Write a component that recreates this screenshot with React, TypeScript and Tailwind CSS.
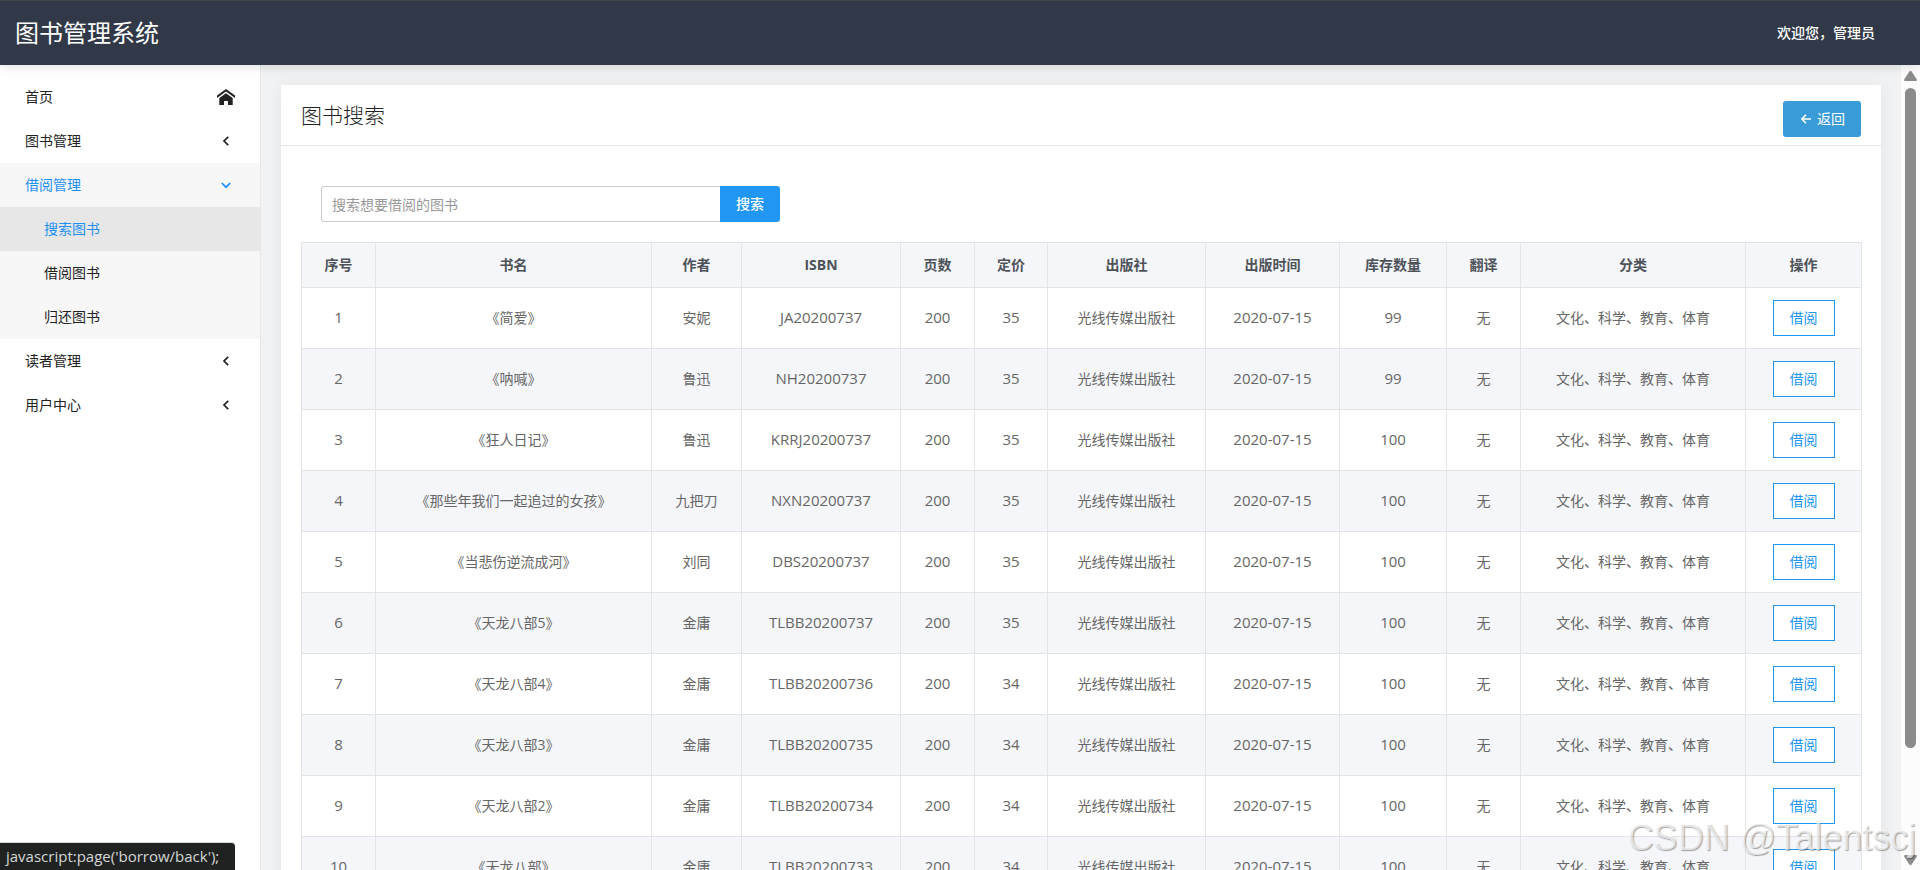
import React, { useState } from 'react';
import clsx from 'clsx';

interface Book {
  id: number;
  name: string;
  author: string;
  isbn: string;
  pages: number;
  price: number;
  press: string;
  date: string;
  stock: number;
  translator: string;
  category: string;
}

interface MenuItem {
  label: string;
  icon?: 'home';
  children?: string[];
}

const common = {
  pages: 200,
  press: '光线传媒出版社',
  date: '2020-07-15',
  translator: '无',
  category: '文化、科学、教育、体育',
};

const books: Book[] = [
  { ...common, id: 1, name: '《简爱》', author: '安妮', isbn: 'JA20200737', price: 35, stock: 99 },
  { ...common, id: 2, name: '《呐喊》', author: '鲁迅', isbn: 'NH20200737', price: 35, stock: 99 },
  { ...common, id: 3, name: '《狂人日记》', author: '鲁迅', isbn: 'KRRJ20200737', price: 35, stock: 100 },
  { ...common, id: 4, name: '《那些年我们一起追过的女孩》', author: '九把刀', isbn: 'NXN20200737', price: 35, stock: 100 },
  { ...common, id: 5, name: '《当悲伤逆流成河》', author: '刘同', isbn: 'DBS20200737', price: 35, stock: 100 },
  { ...common, id: 6, name: '《天龙八部5》', author: '金庸', isbn: 'TLBB20200737', price: 35, stock: 100 },
  { ...common, id: 7, name: '《天龙八部4》', author: '金庸', isbn: 'TLBB20200736', price: 34, stock: 100 },
  { ...common, id: 8, name: '《天龙八部3》', author: '金庸', isbn: 'TLBB20200735', price: 34, stock: 100 },
  { ...common, id: 9, name: '《天龙八部2》', author: '金庸', isbn: 'TLBB20200734', price: 34, stock: 100 },
  { ...common, id: 10, name: '《天龙八部》', author: '金庸', isbn: 'TLBB20200733', price: 34, stock: 100 },
];

// latin: the column holds only digits and latin letters
const columns: { key: keyof Book; title: string; width: string; latin?: boolean }[] = [
  { key: 'id', title: '序号', width: 'w-[74px]', latin: true },
  { key: 'name', title: '书名', width: 'w-[276px]' },
  { key: 'author', title: '作者', width: 'w-[90px]' },
  { key: 'isbn', title: 'ISBN', width: 'w-[159px]', latin: true },
  { key: 'pages', title: '页数', width: 'w-[74px]', latin: true },
  { key: 'price', title: '定价', width: 'w-[73px]', latin: true },
  { key: 'press', title: '出版社', width: 'w-[158px]' },
  { key: 'date', title: '出版时间', width: 'w-[134px]', latin: true },
  { key: 'stock', title: '库存数量', width: 'w-[107px]', latin: true },
  { key: 'translator', title: '翻译', width: 'w-[74px]' },
  { key: 'category', title: '分类', width: 'w-[225px]' },
];

const menu: MenuItem[] = [
  { label: '首页', icon: 'home' },
  { label: '图书管理', children: [] },
  { label: '借阅管理', children: ['搜索图书', '借阅图书', '归还图书'] },
  { label: '读者管理', children: [] },
  { label: '用户中心', children: [] },
];

const HomeIcon = () => (
  <svg className="h-4 w-[18px]" viewBox="0 0 18 16" fill="currentColor" aria-hidden="true">
    <path d="M9 0 0 6.600v2.400L9 2.400l9 6.600V6.600z" />
    <path d="M9 4.200 2.300 9.100V16H7v-4h4v4h4.700V9.100z" />
  </svg>
);

const Chevron = ({ open }: { open: boolean }) => (
  <svg className="h-[10px] w-[10px]" viewBox="0 0 10 10" fill="none" stroke="currentColor" strokeWidth="1.7" aria-hidden="true">
    {open ? <path d="M.8 3 5 7.2 9.2 3" /> : <path d="M7.2.8 3 5l4.2 4.2" />}
  </svg>
);

const Sidebar: React.FC = () => {
  const [openItem, setOpenItem] = useState('借阅管理');
  const [current, setCurrent] = useState('搜索图书');

  return (
    <nav className="w-[261px] shrink-0 border-r border-[#e6e7e9] bg-white pt-[10px] text-[#222]">
      {menu.map((item) => {
        const open = item.label === openItem;
        return (
          <div key={item.label}>
            <button
              className={clsx(
                'flex h-11 w-full items-center justify-between pl-[25px]',
                item.icon ? 'pr-[25px]' : 'pr-[29px]',
                open && 'bg-[#f7f7f7] text-[#1e90f5]'
              )}
              onClick={() => setOpenItem(open ? '' : item.label)}
            >
              <span>{item.label}</span>
              {item.icon ? <HomeIcon /> : <Chevron open={open} />}
            </button>
            {open &&
              item.children?.map((child) => (
                <a
                  key={child}
                  href="#"
                  onClick={() => setCurrent(child)}
                  className={clsx(
                    'flex h-11 items-center pl-11',
                    child === current ? 'bg-[#e7e7e7] text-[#1e90f5]' : 'bg-[#f7f7f7]'
                  )}
                >
                  {child}
                </a>
              ))}
          </div>
        );
      })}
    </nav>
  );
};

const BookTable: React.FC = () => (
  <table className="w-full table-fixed border-collapse text-center">
    <thead>
      <tr className="h-[45px] bg-[#f5f6fa] text-[#4d5259]">
        {columns.map((col) => (
          <th key={col.key} className={clsx('border border-[#e3e4e5] font-bold', col.width)}>
            {col.title}
          </th>
        ))}
        <th className="w-[116px] border border-[#e3e4e5] font-bold">操作</th>
      </tr>
    </thead>
    <tbody className="text-[#666]">
      {books.map((book) => (
        <tr key={book.id} className="h-[61px] even:bg-[#f5f6fa]">
          {columns.map((col) => (
            <td key={col.key} className={clsx('border border-[#e3e4e5]', col.latin && 'text-[15px]')}>
              {book[col.key]}
            </td>
          ))}
          <td className="border border-[#e3e4e5]">
            <button className="h-9 border border-[#2196f3] bg-white px-4 align-middle text-[#2196f3]">借阅</button>
          </td>
        </tr>
      ))}
    </tbody>
  </table>
);

const ScrollBar = () => (
  <div className="flex w-[19px] shrink-0 flex-col items-center bg-[#fcfcfc] pt-[6px] pb-[5px] text-[#8b8b8b]" aria-hidden="true">
    <svg className="h-[10px] w-[13px] shrink-0" viewBox="0 0 13 10" fill="currentColor">
      <path d="M5.4.6a1.4 1.4 0 0 1 2.2 0l5 7.4c.6 1 .2 2-1 2H1.4C.2 10-.2 9 .4 8z" />
    </svg>
    <div className="mt-[7px] flex w-[11px] flex-1 flex-col">
      <div className="h-[86%] rounded-full bg-[#8b8b8b]" />
    </div>
    <svg className="h-[10px] w-[13px] shrink-0" viewBox="0 0 13 10" fill="currentColor">
      <path d="M5.4 9.4a1.4 1.4 0 0 0 2.2 0l5-7.4c.6-1 .2-2-1-2H1.4C.2 0-.2 1 .4 2z" />
    </svg>
  </div>
);

const App: React.FC = () => {
  const [keyword, setKeyword] = useState('');

  return (
    <div className="relative flex h-screen flex-col overflow-hidden bg-[#f0f2f4] font-['Open_Sans','Noto_Sans_CJK_SC',sans-serif] text-sm">
      <header className="relative z-10 flex h-[65px] shrink-0 items-center justify-between border-t border-[#434645] bg-[#313847] pr-[45px] pl-[15px] text-white shadow-[0_2px_10px_rgba(0,0,0,0.12)]">
        <h1 className="text-2xl">图书管理系统</h1>
        <span className="font-medium">欢迎您，管理员</span>
      </header>

      <div className="flex min-h-0 flex-1">
        <Sidebar />

        <main className="min-w-0 flex-1 overflow-hidden p-5">
          <section className="bg-white shadow-[0_0_16px_rgba(0,0,0,0.06)]">
            {/* Card title */}
            <div className="flex h-[61px] items-start justify-between border-b border-[#e3e4e5] px-5">
              <h2 className="pt-4 text-[21px] leading-7 font-light text-[#222]">图书搜索</h2>
              <button className="mt-4 flex h-9 items-center gap-[6px] rounded-[3px] bg-[#3a9bd9] px-4 pl-[18px] text-white">
                <svg className="h-[10px] w-[10px]" viewBox="0 0 10 10" fill="none" stroke="currentColor" strokeWidth="1.6" aria-hidden="true">
                  <path d="M10 5H1M5 .8.9 5 5 9.2" />
                </svg>
                返回
              </button>
            </div>

            <div className="p-5">
              {/* Search form */}
              <form className="mt-5 mb-5 ml-5 flex w-[459px]" onSubmit={(e) => e.preventDefault()}>
                <input
                  type="text"
                  aria-label="搜索图书"
                  className="h-9 min-w-0 flex-1 rounded-l-[3px] border border-r-0 border-[#ccc] px-[10px] text-[#4d5259] placeholder:text-[#999]"
                  placeholder="搜索想要借阅的图书"
                  value={keyword}
                  onChange={(e) => setKeyword(e.target.value)}
                />
                <button type="submit" className="h-9 rounded-r-[3px] bg-[#2196f3] px-4 font-medium text-white">
                  搜索
                </button>
              </form>

              <BookTable />
            </div>
          </section>
        </main>

        <ScrollBar />
      </div>

      {/* Link status bubble */}
      <div className="absolute bottom-0 left-0 flex h-7 items-center rounded-tr-[4px] border-t border-[#d5d8da] bg-[#202222] pr-4 pl-[6px] text-[15px] text-[#d4d6d5]">
        javascript:page('borrow/back');
      </div>

      <div className="pointer-events-none absolute right-1 bottom-3 font-['Liberation_Sans',sans-serif] text-4xl leading-10 whitespace-nowrap text-white/70 [text-shadow:1px_1px_1px_rgba(0,0,0,0.35)]">
        CSDN @Talentscj
      </div>
    </div>
  );
};

export default App;
